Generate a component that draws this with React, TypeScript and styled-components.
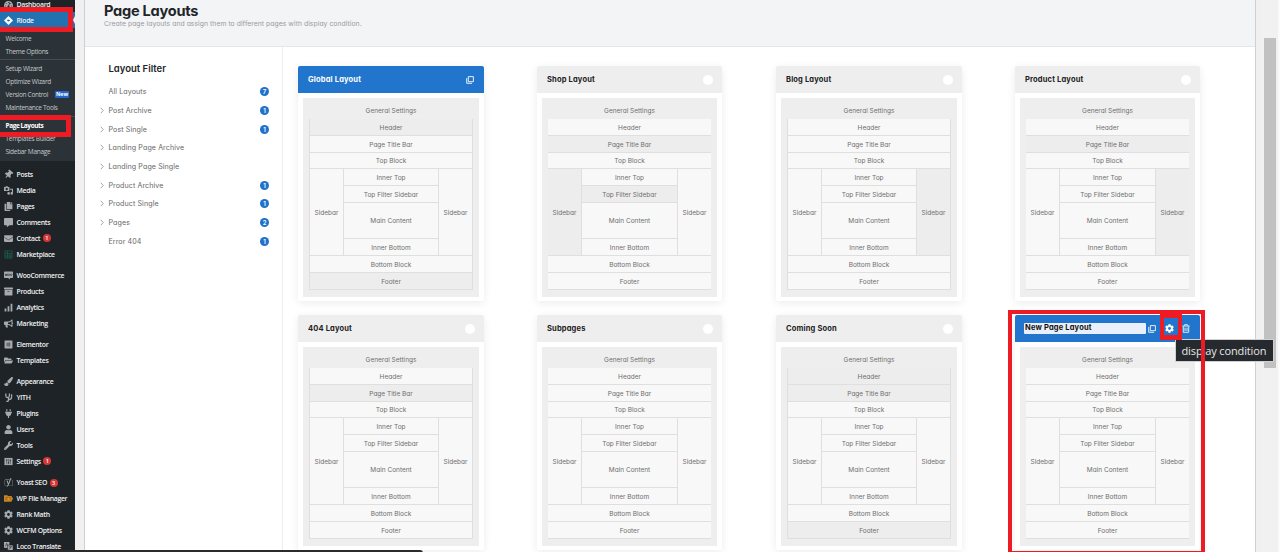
import React from 'react';
import styled, { createGlobalStyle, css } from 'styled-components';
import {
  FaTachometerAlt, FaThumbtack, FaCopy, FaCommentAlt, FaEnvelope, FaArchive, FaBullhorn,
  FaElementor, FaFolderOpen, FaPaintBrush, FaPlug, FaUser, FaWrench, FaCog, FaYoast,
} from 'react-icons/fa';

const Global = createGlobalStyle`
  *{box-sizing:border-box}
  html,body{margin:0;height:552px;overflow:hidden;background:#f0f0f0}
  body{font-family:Inter,"Liberation Sans",sans-serif;font-feature-settings:"cv11"}
`;

const Page = styled.div`
  position: relative; display: flex; width: 1280px; height: 552px; overflow: hidden; background: #f0f0f0;
`;

/* ---------- admin menu ---------- */
const Menu = styled.nav`
  width: 75px; height: 552px; overflow: hidden; flex: none; background: #1d2327; color: #f0f0f1;
  font-family: "Open Sans", "Noto Sans", sans-serif; font-feature-settings: normal;
`;
const MenuItem = styled.div<{ $active?: boolean; $gap?: number }>`
  display: flex; align-items: center; height: 16px; padding-left: 3.5px; white-space: nowrap;
  margin-top: ${p => p.$gap || 0}px; font-size: 6.9px; letter-spacing: -0.3px; font-weight: 600;
  background: ${p => (p.$active ? '#2271b1' : 'transparent')};
`;
const MenuIcon = styled.span<{ $color?: string }>`
  width: 10px; height: 10px; margin-right: 3px; display: flex; align-items: center; justify-content: center;
  color: ${p => p.$color || '#a7aaad'}; flex: none;
  svg { width: 9px; height: 9px; }
`;
const MenuBadge = styled.span`
  width: 8px; height: 8px; margin-left: 2.5px; border-radius: 50%; background: #d63638; color: #fff;
  font-size: 5.5px; line-height: 8px; text-align: center; letter-spacing: 0; font-weight: 600;
`;
const Arrow = styled.i`
  margin-left: auto; border: solid transparent; border-width: 4px 2px 4px 0; border-right-color: #f0f0f1;
`;
const SubMenu = styled.div`
  height: 133px; padding-top: 3.5px; background: #2c3338;
`;
const SubItem = styled.div<{ $current?: boolean }>`
  height: 13px; line-height: 13px; padding-left: 5.5px; font-size: 6.5px; white-space: nowrap;
  letter-spacing: ${p => (p.$current ? '-0.42px' : '-0.3px')};
  display: flex; align-items: center;
  color: ${p => (p.$current ? '#fff' : '#c5c8ca')}; font-weight: ${p => (p.$current ? 700 : 400)};
`;
const SubRule = styled.div`height: 1px; margin: 1.5px 0 2px; background: #464b50;`;
const NewTag = styled.span`
  margin-left: 7px; width: 14px; height: 7px; background: #2467cf; color: #fff; font-size: 5.4px; line-height: 7px;
  text-align: center; font-weight: 700; border-radius: 1px; letter-spacing: -0.1px;
`;

/* ---------- main panel ---------- */
const Panel = styled.main`
  width: 1172px; height: 552px; margin-left: 9px; flex: none; background: #fff;
  border: solid #cfd0d2; border-width: 0 1.5px 0 1px; overflow: hidden;
`;
const PanelHead = styled.header`
  height: 47px; padding: 0 0 0 19px; background: #f3f4f6; border-bottom: 1px solid #e3e6ea;
  h1 { margin: 0; height: 18px; padding-top: 1px; line-height: 20px; font-size: 14.6px; font-weight: 700; letter-spacing: -0.27px; color: #222529; }
  p { margin: 0; height: 12px; line-height: 12px; font-size: 6.8px; color: #9a9b9d; letter-spacing: 0.05px; }
`;
const PanelBody = styled.div`display: flex; height: 505px;`;
const Filter = styled.aside`
  width: 198px; flex: none; padding: 12.5px 13px 0 15px; border-right: 1px solid #ededed;
  h2 { margin: 0 0 5px 8.5px; line-height: 18px; font-size: 9.5px; font-weight: 600; color: #222529; letter-spacing: 0; }
`;
const FilterRow = styled.div`
  display: flex; align-items: center; height: 18.7px; font-size: 7.1px; color: #666; letter-spacing: 0.09px;
`;
const Chevron = styled.svg`width: 4px; height: 7px; margin-right: 4.5px; flex: none;`;
const Count = styled.span`
  margin-left: auto; width: 9px; height: 9px; border-radius: 50%; background: #1f72ca; color: #fff;
  font-size: 6px; line-height: 9px; text-align: center; font-weight: 600; letter-spacing: 0;
`;

const Cards = styled.section`
  display: grid; grid-template-columns: repeat(4, 239px); grid-auto-rows: 249px; padding: 19px 0 0 15px;
  width: 972px; flex: none;
`;
const Card = styled.article<{ $w: number }>`
  width: ${p => p.$w}px; height: 235px; background: #fff; border-radius: 2px; box-shadow: 0 2px 9px rgba(0,0,0,.08);
`;
const CardHead = styled.div<{ $blue?: boolean }>`
  height: 27px; display: flex; align-items: center; padding: 0 9px 0 10px; border-radius: 2px 2px 0 0;
  font-size: 7.5px; font-weight: 700; letter-spacing: 0.17px;
  background: ${p => (p.$blue ? '#2275cd' : '#eee')}; color: ${p => (p.$blue ? '#fff' : '#222')};
`;
const Dot = styled.span`margin-left: auto; width: 10px; height: 10px; border-radius: 50%; background: #fff;`;
const HeadIcons = styled.span`
  margin-left: auto; margin-right: 1px; display: flex; align-items: center; color: #fff;
`;
const NameField = styled.span`
  width: 123px; height: 10.5px; margin-left: -1px; padding-left: 1px; line-height: 10.5px; background: #e9f0fb; color: #111; border-radius: 1px;
`;
const Board = styled.div`
  height: 198.5px; margin: 5px 5px 0; padding: 0 6px; background: #eee; color: #6e6e6e; font-size: 6.5px; letter-spacing: 0;
`;
const Settings = styled.div`height: 21px; padding-top: 4px; line-height: 18px; text-align: center;`;
const Slots = styled.div<{ $edge: boolean }>`
  display: grid; grid-template-columns: 33px 1fr 33px; grid-template-rows: 16px 16px 15px 16px 16px 35px 16px 16px 16px;
  gap: 1px; background: #dfdfdf; padding-bottom: 1px;
  ${p => p.$edge && css`border: solid #dfdfdf; border-width: 0 1px;`}
`;
const Slot = styled.div<{ $filled?: boolean; $area: string }>`
  grid-area: ${p => p.$area}; display: flex; align-items: center; justify-content: center; padding-top: 1px;
  background: ${p => (p.$filled ? '#ededed' : '#f8f8f8')};
`;

/* ---------- browser chrome and highlights ---------- */
const ScrollTrack = styled.div`
  margin-left: auto; width: 18px; height: 552px; padding: 38px 4px 0 2px; background: #f1f1f1; border-right: 2px solid #fafafa;
`;
const ScrollThumb = styled.div`width: 12px; height: 330px; background: #c1c1c1;`;
const Tooltip = styled.div`
  position: absolute; left: 1175px; top: 339px; width: 99px; height: 23px; padding-left: 5.5px; background: #26292d; border: 1px solid #d0d0d0;
  color: #e8e8e8; font: 11px/21px "Open Sans", "Noto Sans", sans-serif; letter-spacing: -0.12px; white-space: nowrap;
`;
const Mark = styled.div<{ $x: number; $y: number; $w: number; $h: number; $b: string }>`
  position: absolute; left: ${p => p.$x}px; top: ${p => p.$y}px; width: ${p => p.$w}px; height: ${p => p.$h}px;
  border: solid #ed1c24; border-width: ${p => p.$b};
`;
const StatusEdge = styled.div`
  position: absolute; left: 0; top: 550px; width: 423px; height: 4px; background: #2b2b2e; border-radius: 0 3px 0 0;
`;

const CopyIcon = () => (
  <svg width="8" height="8" viewBox="0 0 9 9" fill="none" stroke="currentColor" strokeWidth="1">
    <path d="M2.6 .7H8.3V6.4H2.6Z" /><path d="M.8 2.3V8.2H6.8" />
  </svg>
);
const TrashIcon = () => (
  <svg width="8" height="9" viewBox="0 0 8 9" fill="none" stroke="currentColor" strokeWidth="1" opacity=".85">
    <path d="M.4 2H7.6M2.6 1.8V.7H5.4V1.8M1.3 2.2V8.3H6.7V2.2M3 3.6V7M5 3.6V7" />
  </svg>
);
const RiodeIcon = () => (
  <svg viewBox="0 0 10 10"><path d="M5 0 10 5 5 10 0 5Z" fill="#fff" /><path d="M3.2 5 5 3.2V4.4H6.6V5.6H5V6.8Z" fill="#2271b1" /></svg>
);
const MediaIcon = () => (
  <svg viewBox="0 0 10 10" fill="currentColor"><path d="M0 1H1.5L2 .3H4L4.4 1H6V5.5H0ZM3 2A1.3 1.3 0 1 0 3.01 2Z" fillRule="evenodd" /><path d="M6.5 3H10V8.2A1.4 1.4 0 1 1 8.8 6.8V4.3H6.5Z" /><circle cx="5.2" cy="8.2" r="1.5" /></svg>
);
const MarketIcon = () => (
  <svg viewBox="0 0 10 10" fill="none" stroke="currentColor"><path d="M1 1H9V9H1ZM1 4H9M4 1V9M6.7 4V9M1 6.7H9" /></svg>
);
const WooIcon = () => (
  <svg viewBox="0 0 10 10" fill="currentColor"><path d="M.8 .5H9.2Q10 .5 10 1.3V7Q10 7.8 9.2 7.8H6.4L6.8 9.5 4.4 7.8H.8Q0 7.8 0 7V1.3Q0 .5 .8 .5Z" /><path d="M1.2 3 1.9 5.3 2.6 3.6 3.3 5.3 4 3" fill="none" stroke="#1d2327" strokeWidth=".7" /><circle cx="5.5" cy="4.2" r=".9" fill="none" stroke="#1d2327" strokeWidth=".6" /><circle cx="8" cy="4.2" r=".9" fill="none" stroke="#1d2327" strokeWidth=".6" /></svg>
);
const BarsIcon = () => (
  <svg viewBox="0 0 10 10" fill="currentColor"><path d="M.7 6H2.7V9.5H.7ZM4 3.6H6V9.5H4ZM7.3 .8H9.3V9.5H7.3Z" /></svg>
);
const YithIcon = () => (
  <svg viewBox="0 0 10 10" fill="none" stroke="currentColor" strokeWidth="1.4"><path d="M2 .5V3Q2 5 4 5T6 3V.5M8.4 1.5V5Q8.4 7 5 7.4M5 5V8.2Q5 9.4 2.6 9.3" /></svg>
);
const SettingsIcon = () => (
  <svg viewBox="0 0 10 10"><path d="M.5 1H9.5V9H.5Z" fill="currentColor" /><path d="M3 2V8M5 2V8M7 2V8" stroke="#1d2327" strokeWidth=".5" /><path d="M2.3 3.5H3.7M4.3 6.5H5.7M6.3 4.2H7.7" stroke="#1d2327" /></svg>
);
const FolderIcon = () => (
  <svg viewBox="0 0 11 10"><path d="M0 1H4L5 2H9L11 5 9 9H0Z" fill="#c98523" /><path d="M2 3H8V7H2Z" fill="#a9681b" /><circle cx="5.5" cy="5.5" r="1.5" fill="#d59a3e" /></svg>
);
const LocoIcon = () => (
  <svg viewBox="0 0 10 10"><path d="M0 0H6V6.5H0Z" fill="currentColor" /><path d="M4 3.4H10V10H4Z" fill="currentColor" stroke="#1d2327" strokeWidth=".6" /><path d="M1.5 4.8 3 1.5 4.2 4.3M5.5 8.5 8.3 5M5.5 5.3H8.5" stroke="#1d2327" fill="none" strokeWidth=".7" /></svg>
);
const TiltedPin = styled(FaThumbtack)`transform: rotate(40deg);`;

type Entry = { label: string; icon: React.ReactNode; gap?: number; badge?: string; color?: string };
const entries: Entry[] = [
  { label: 'Posts', icon: <TiltedPin />, gap: 5 },
  { label: 'Media', icon: <MediaIcon /> },
  { label: 'Pages', icon: <FaCopy /> },
  { label: 'Comments', icon: <FaCommentAlt /> },
  { label: 'Contact', icon: <FaEnvelope />, badge: '1' },
  { label: 'Marketplace', icon: <MarketIcon />, color: '#1d5a48' },
  { label: 'WooCommerce', icon: <WooIcon />, gap: 5 },
  { label: 'Products', icon: <FaArchive /> },
  { label: 'Analytics', icon: <BarsIcon /> },
  { label: 'Marketing', icon: <FaBullhorn /> },
  { label: 'Elementor', icon: <FaElementor />, gap: 5 },
  { label: 'Templates', icon: <FaFolderOpen /> },
  { label: 'Appearance', icon: <FaPaintBrush />, gap: 5 },
  { label: 'YITH', icon: <YithIcon /> },
  { label: 'Plugins', icon: <FaPlug /> },
  { label: 'Users', icon: <FaUser /> },
  { label: 'Tools', icon: <FaWrench /> },
  { label: 'Settings', icon: <SettingsIcon />, badge: '1' },
  { label: 'Yoast SEO', icon: <FaYoast />, gap: 5.5, badge: '3' },
  { label: 'WP File Manager', icon: <FolderIcon /> },
  { label: 'Rank Math', icon: <FaCog /> },
  { label: 'WCFM Options', icon: <FaCog /> },
  { label: 'Loco Translate', icon: <LocoIcon /> },
];

const filters: [string, boolean, string?][] = [
  ['All Layouts', false, '7'], ['Post Archive', true, '1'], ['Post Single', true, '1'],
  ['Landing Page Archive', true], ['Landing Page Single', true], ['Product Archive', true, '1'],
  ['Product Single', true, '1'], ['Pages', true, '2'], ['Error 404', false, '1'],
];

const slots: [string, string, string][] = [
  ['header', 'Header', '1 / 1 / 2 / 4'], ['title', 'Page Title Bar', '2 / 1 / 3 / 4'], ['top', 'Top Block', '3 / 1 / 4 / 4'],
  ['left', 'Sidebar', '4 / 1 / 8 / 2'], ['innerTop', 'Inner Top', '4 / 2 / 5 / 3'], ['filter', 'Top Filter Sidebar', '5 / 2 / 6 / 3'],
  ['main', 'Main Content', '6 / 2 / 7 / 3'], ['innerBottom', 'Inner Bottom', '7 / 2 / 8 / 3'], ['right', 'Sidebar', '4 / 3 / 8 / 4'],
  ['bottom', 'Bottom Block', '8 / 1 / 9 / 4'], ['footer', 'Footer', '9 / 1 / 10 / 4'],
];

const layouts: { name: string; filled: string[]; kind?: 'global' | 'new' }[] = [
  { name: 'Global Layout', filled: ['header', 'footer'], kind: 'global' },
  { name: 'Shop Layout', filled: ['title', 'left', 'filter'] },
  { name: 'Blog Layout', filled: ['right'] },
  { name: 'Product Layout', filled: ['title', 'right'] },
  { name: '404 Layout', filled: ['title'] },
  { name: 'Subpages', filled: [] },
  { name: 'Coming Soon', filled: ['header', 'title', 'footer'] },
  { name: 'New Page Layout', filled: [], kind: 'new' },
];

const NewIcons = styled(HeadIcons)`
  margin-left: 2px; gap: 8.5px;
`;

export default function App() {
  return (
    <Page>
      <Global />
      <Menu>
        <MenuItem $gap={-4}><MenuIcon><FaTachometerAlt /></MenuIcon>Dashboard</MenuItem>
        <MenuItem $active><MenuIcon><RiodeIcon /></MenuIcon>Riode<Arrow /></MenuItem>
        <SubMenu>
          <SubItem>Welcome</SubItem>
          <SubItem>Theme Options</SubItem>
          <SubRule />
          <SubItem>Setup Wizard</SubItem>
          <SubItem>Optimize Wizard</SubItem>
          <SubItem>Version Control<NewTag>New</NewTag></SubItem>
          <SubItem>Maintenance Tools</SubItem>
          <SubRule />
          <SubItem $current>Page Layouts</SubItem>
          <SubItem>Templates Builder</SubItem>
          <SubItem>Sidebar Manage</SubItem>
        </SubMenu>
        {entries.map(e => (
          <MenuItem key={e.label} $gap={e.gap}>
            <MenuIcon $color={e.color}>{e.icon}</MenuIcon>{e.label}{e.badge && <MenuBadge>{e.badge}</MenuBadge>}
          </MenuItem>
        ))}
      </Menu>

      <Panel>
        <PanelHead>
          <h1>Page Layouts</h1>
          <p>Create page layouts and assign them to different pages with display condition.</p>
        </PanelHead>
        <PanelBody>
          <Filter>
            <h2>Layout Filter</h2>
            {filters.map(([label, open, count]) => (
              <FilterRow key={label}>
                <Chevron viewBox="0 0 4 7" fill="none" stroke={open ? '#999' : 'none'} strokeWidth=".9"><path d="M.7 .8 3.3 3.5 .7 6.2" /></Chevron>
                {label}
                {count && <Count>{count}</Count>}
              </FilterRow>
            ))}
          </Filter>
          <Cards>
            {layouts.map((l, i) => (
              <Card key={l.name} $w={i % 2 ? 185 : 186}>
                <CardHead $blue={!!l.kind}>
                  {l.kind === 'new' ? <NameField>{l.name}</NameField> : l.name}
                  {!l.kind && <Dot />}
                  {l.kind === 'global' && <HeadIcons><CopyIcon /></HeadIcons>}
                  {l.kind === 'new' && <NewIcons><CopyIcon /><FaCog size={9} /><TrashIcon /></NewIcons>}
                </CardHead>
                <Board>
                  <Settings>General Settings</Settings>
                  <Slots $edge={i % 2 === 0}>
                    {slots.map(([id, label, area]) => (
                      <Slot key={id} $area={area} $filled={l.filled.includes(id)}>{label}</Slot>
                    ))}
                  </Slots>
                </Board>
              </Card>
            ))}
          </Cards>
        </PanelBody>
      </Panel>
      <ScrollTrack><ScrollThumb /></ScrollTrack>

      <Tooltip>display condition</Tooltip>
      <Mark $x={-5} $y={7} $w={78} $h={25} $b="5px" />
      <Mark $x={-5} $y={115} $w={76} $h={22} $b="5px" />
      <Mark $x={1008} $y={310} $w={197} $h={245} $b="4px" />
      <Mark $x={1160} $y={313} $w={22} $h={27} $b="5px 4px" />
      <StatusEdge />
    </Page>
  );
}
